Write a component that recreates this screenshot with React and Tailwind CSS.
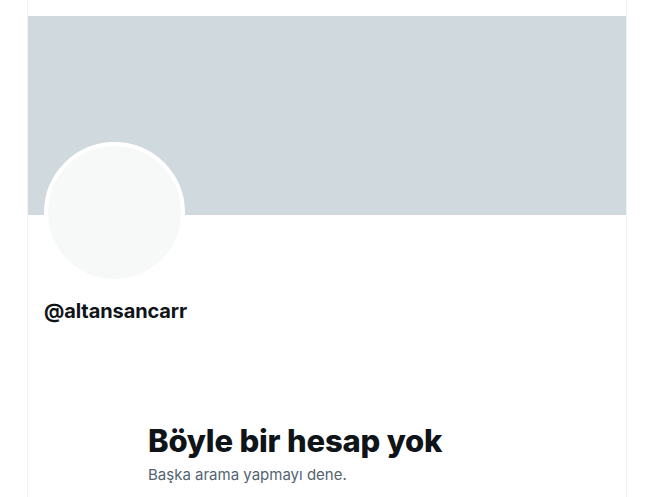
export default function App() {
  return (
    <div className="min-h-[497px] bg-white font-['Inter','Noto_Sans',sans-serif] text-[#0f1419]">
      <div className="ml-[27px] w-[600px] min-h-[497px] border-x border-[#eff3f4]">
        <div className="h-4" />
        <div className="h-[199px] bg-[#cfd9de]" />
        <div className="relative px-4">
          <div className="-mt-[73px] flex h-[141px] w-[141px] items-center justify-center rounded-full border-4 border-white bg-[#f7f9f9]" />
          <div className="mt-[16px] text-[20px] font-bold leading-6 tracking-[-0.1px]">@altansancarr</div>
        </div>
        <div className="ml-[120px] mt-[100px]">
          <h1 className="text-[31px] font-extrabold leading-9 tracking-[-0.2px]">Böyle bir hesap yok</h1>
          <p className="mt-[6px] text-[15px] leading-5 text-[#536471]">Başka arama yapmayı dene.</p>
        </div>
      </div>
    </div>
  );
}
